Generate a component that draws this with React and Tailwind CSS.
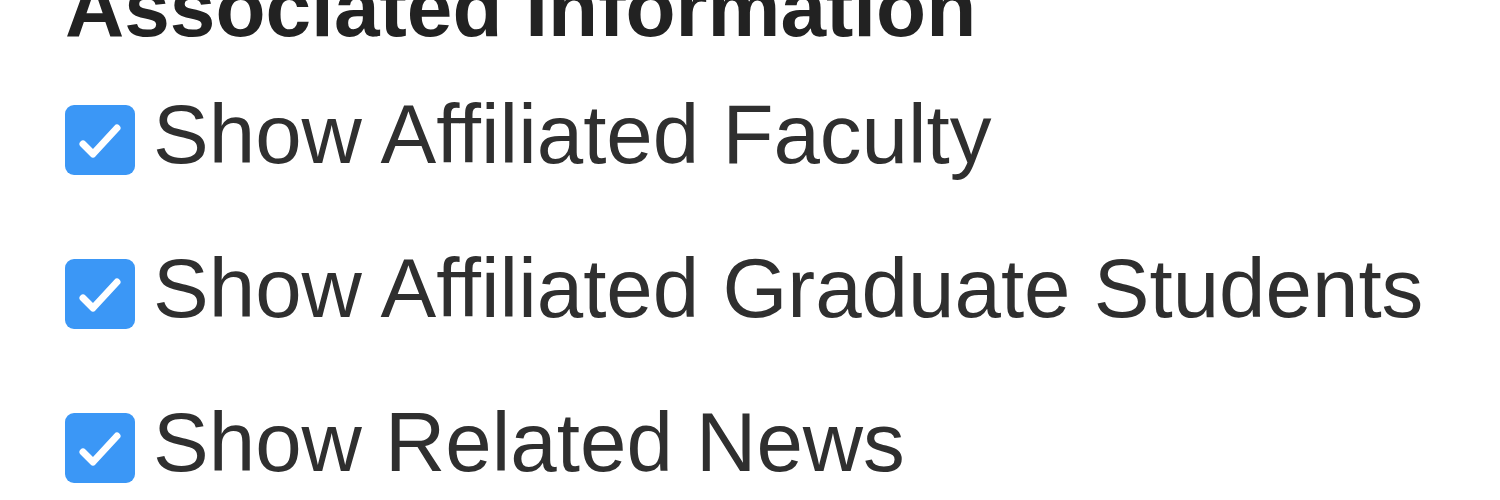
import React from "react";

const items = [
  "Show Affiliated Faculty",
  "Show Affiliated Graduate Students",
  "Show Related News",
];

const CheckBox = () => (
  <span className="mt-[12px] flex h-[70px] w-[70px] shrink-0 items-center justify-center rounded-[9px] bg-[#3b97f6]">
    <svg width="70" height="70" viewBox="0 0 70 70">
      <polyline
        points="18,39 28,49 52,23"
        fill="none"
        stroke="#ffffff"
        strokeWidth="7"
        strokeLinecap="round"
        strokeLinejoin="round"
      />
    </svg>
  </span>
);

export default function App() {
  return (
    <div className="h-[500px] w-[1500px] overflow-hidden bg-white pl-[65px] font-['Liberation_Sans',Arial,sans-serif] text-[#2f2f2f]">
      <h2 className="text-[82px] font-bold leading-[16px] text-[#222]">Associated Information</h2>
      <div className="mt-[77px] flex flex-col gap-[72px]">
        {items.map((label) => (
          <label key={label} className="flex items-start gap-[18px]">
            <CheckBox />
            <span className="text-[83.5px] leading-[82px]">{label}</span>
          </label>
        ))}
      </div>
    </div>
  );
}
